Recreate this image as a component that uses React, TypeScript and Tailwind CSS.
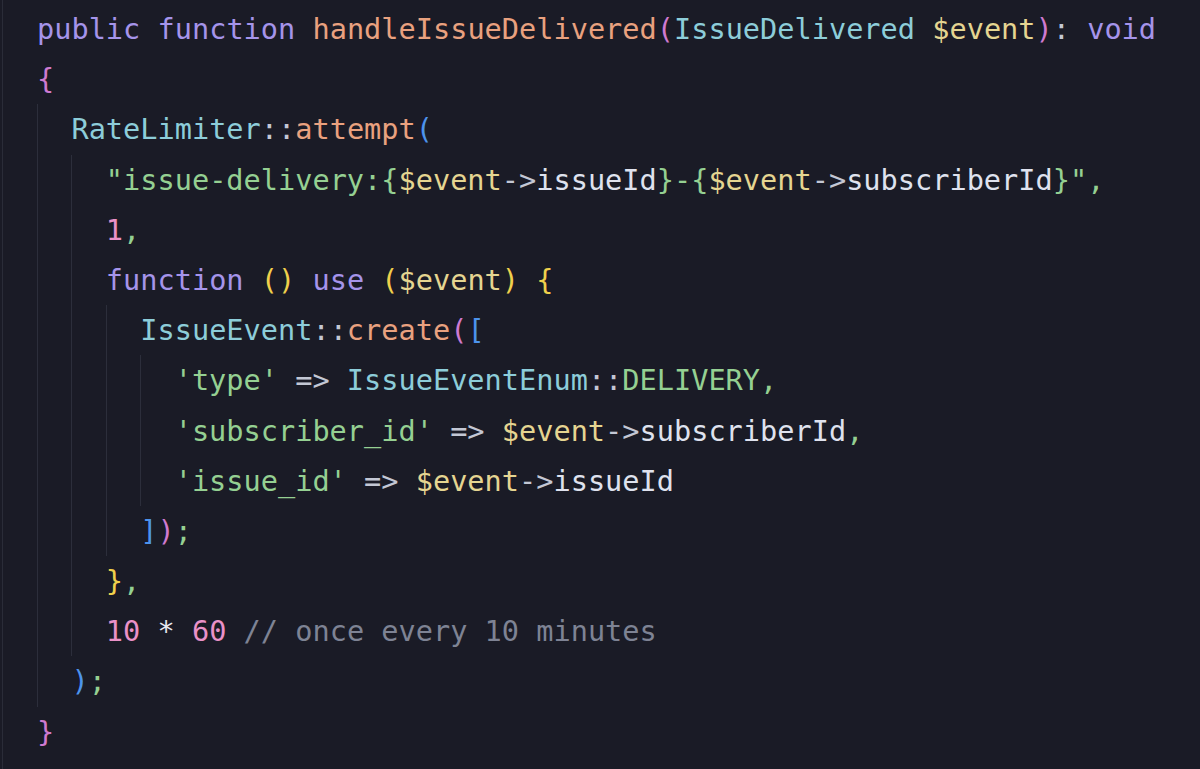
import React from "react";

type Tok = [string, string];

const KW = "text-[#a594ea]";
const FN = "text-[#e9a17f]";
const CLS = "text-[#8dcdd9]";
const VAR = "text-[#e5d591]";
const STR = "text-[#95d092]";
const NUM = "text-[#ea91c8]";
const PUN = "text-[#c3c7d4]";
const PROP = "text-[#dfe2ee]";
const MAG = "text-[#cf7ad0]";
const BLUE = "text-[#4d93ec]";
const YEL = "text-[#f0d04c]";
const COM = "text-[#7e8394]";
const WHITE = "text-[#e6e8f0]";

const lines: { indent: number; toks: Tok[] }[] = [
  {
    indent: 0,
    toks: [
      ["public", KW],
      [" ", PUN],
      ["function", KW],
      [" ", PUN],
      ["handleIssueDelivered", FN],
      ["(", MAG],
      ["IssueDelivered", CLS],
      [" ", PUN],
      ["$event", VAR],
      [")", MAG],
      [":", PUN],
      [" ", PUN],
      ["void", KW],
    ],
  },
  { indent: 0, toks: [["{", MAG]] },
  {
    indent: 1,
    toks: [
      ["RateLimiter", CLS],
      ["::", PUN],
      ["attempt", FN],
      ["(", BLUE],
    ],
  },
  {
    indent: 2,
    toks: [
      ['"issue-delivery:{', STR],
      ["$event", VAR],
      ["->", PUN],
      ["issueId", PROP],
      ["}-{", STR],
      ["$event", VAR],
      ["->", PUN],
      ["subscriberId", PROP],
      ['}"', STR],
      [",", STR],
    ],
  },
  {
    indent: 2,
    toks: [
      ["1", NUM],
      [",", STR],
    ],
  },
  {
    indent: 2,
    toks: [
      ["function", KW],
      [" ", PUN],
      ["()", YEL],
      [" ", PUN],
      ["use", KW],
      [" ", PUN],
      ["(", YEL],
      ["$event", VAR],
      [")", YEL],
      [" ", PUN],
      ["{", YEL],
    ],
  },
  {
    indent: 3,
    toks: [
      ["IssueEvent", CLS],
      ["::", PUN],
      ["create", FN],
      ["(", MAG],
      ["[", BLUE],
    ],
  },
  {
    indent: 4,
    toks: [
      ["'type'", STR],
      [" ", PUN],
      ["=>", PUN],
      [" ", PUN],
      ["IssueEventEnum", CLS],
      ["::", PUN],
      ["DELIVERY", STR],
      [",", STR],
    ],
  },
  {
    indent: 4,
    toks: [
      ["'subscriber_id'", STR],
      [" ", PUN],
      ["=>", PUN],
      [" ", PUN],
      ["$event", VAR],
      ["->", PUN],
      ["subscriberId", PROP],
      [",", STR],
    ],
  },
  {
    indent: 4,
    toks: [
      ["'issue_id'", STR],
      [" ", PUN],
      ["=>", PUN],
      [" ", PUN],
      ["$event", VAR],
      ["->", PUN],
      ["issueId", PROP],
    ],
  },
  {
    indent: 3,
    toks: [
      ["]", BLUE],
      [")", MAG],
      [";", STR],
    ],
  },
  {
    indent: 2,
    toks: [
      ["}", YEL],
      [",", STR],
    ],
  },
  {
    indent: 2,
    toks: [
      ["10", NUM],
      [" ", PUN],
      ["*", WHITE],
      [" ", PUN],
      ["60", NUM],
      [" ", PUN],
      ["// once every 10 minutes", COM],
    ],
  },
  {
    indent: 1,
    toks: [
      [")", BLUE],
      [";", STR],
    ],
  },
  { indent: 0, toks: [["}", MAG]] },
];

export default function App() {
  return (
    <div className="w-[1200px] h-[769px] bg-[#1a1b26] overflow-hidden pl-[2px]">
      <div
        className="h-full border-l border-[#2a2c38] pl-[34px] pt-[4px] text-[28.6px] leading-[50.2px] whitespace-pre"
        style={{ fontFamily: '"DejaVu Sans Mono", "Liberation Mono", monospace' }}
      >
        {lines.map((ln, i) => (
          <div key={i} className="flex h-[50.2px]">
            {Array.from({ length: ln.indent }).map((_, k) => (
              <span
                key={k}
                className="inline-block w-[2ch] shrink-0 border-l border-[#2c2e3b]"
              />
            ))}
            <span>
              {ln.toks.map(([t, c], j) => (
                <span key={j} className={c}>
                  {t}
                </span>
              ))}
            </span>
          </div>
        ))}
      </div>
    </div>
  );
}
